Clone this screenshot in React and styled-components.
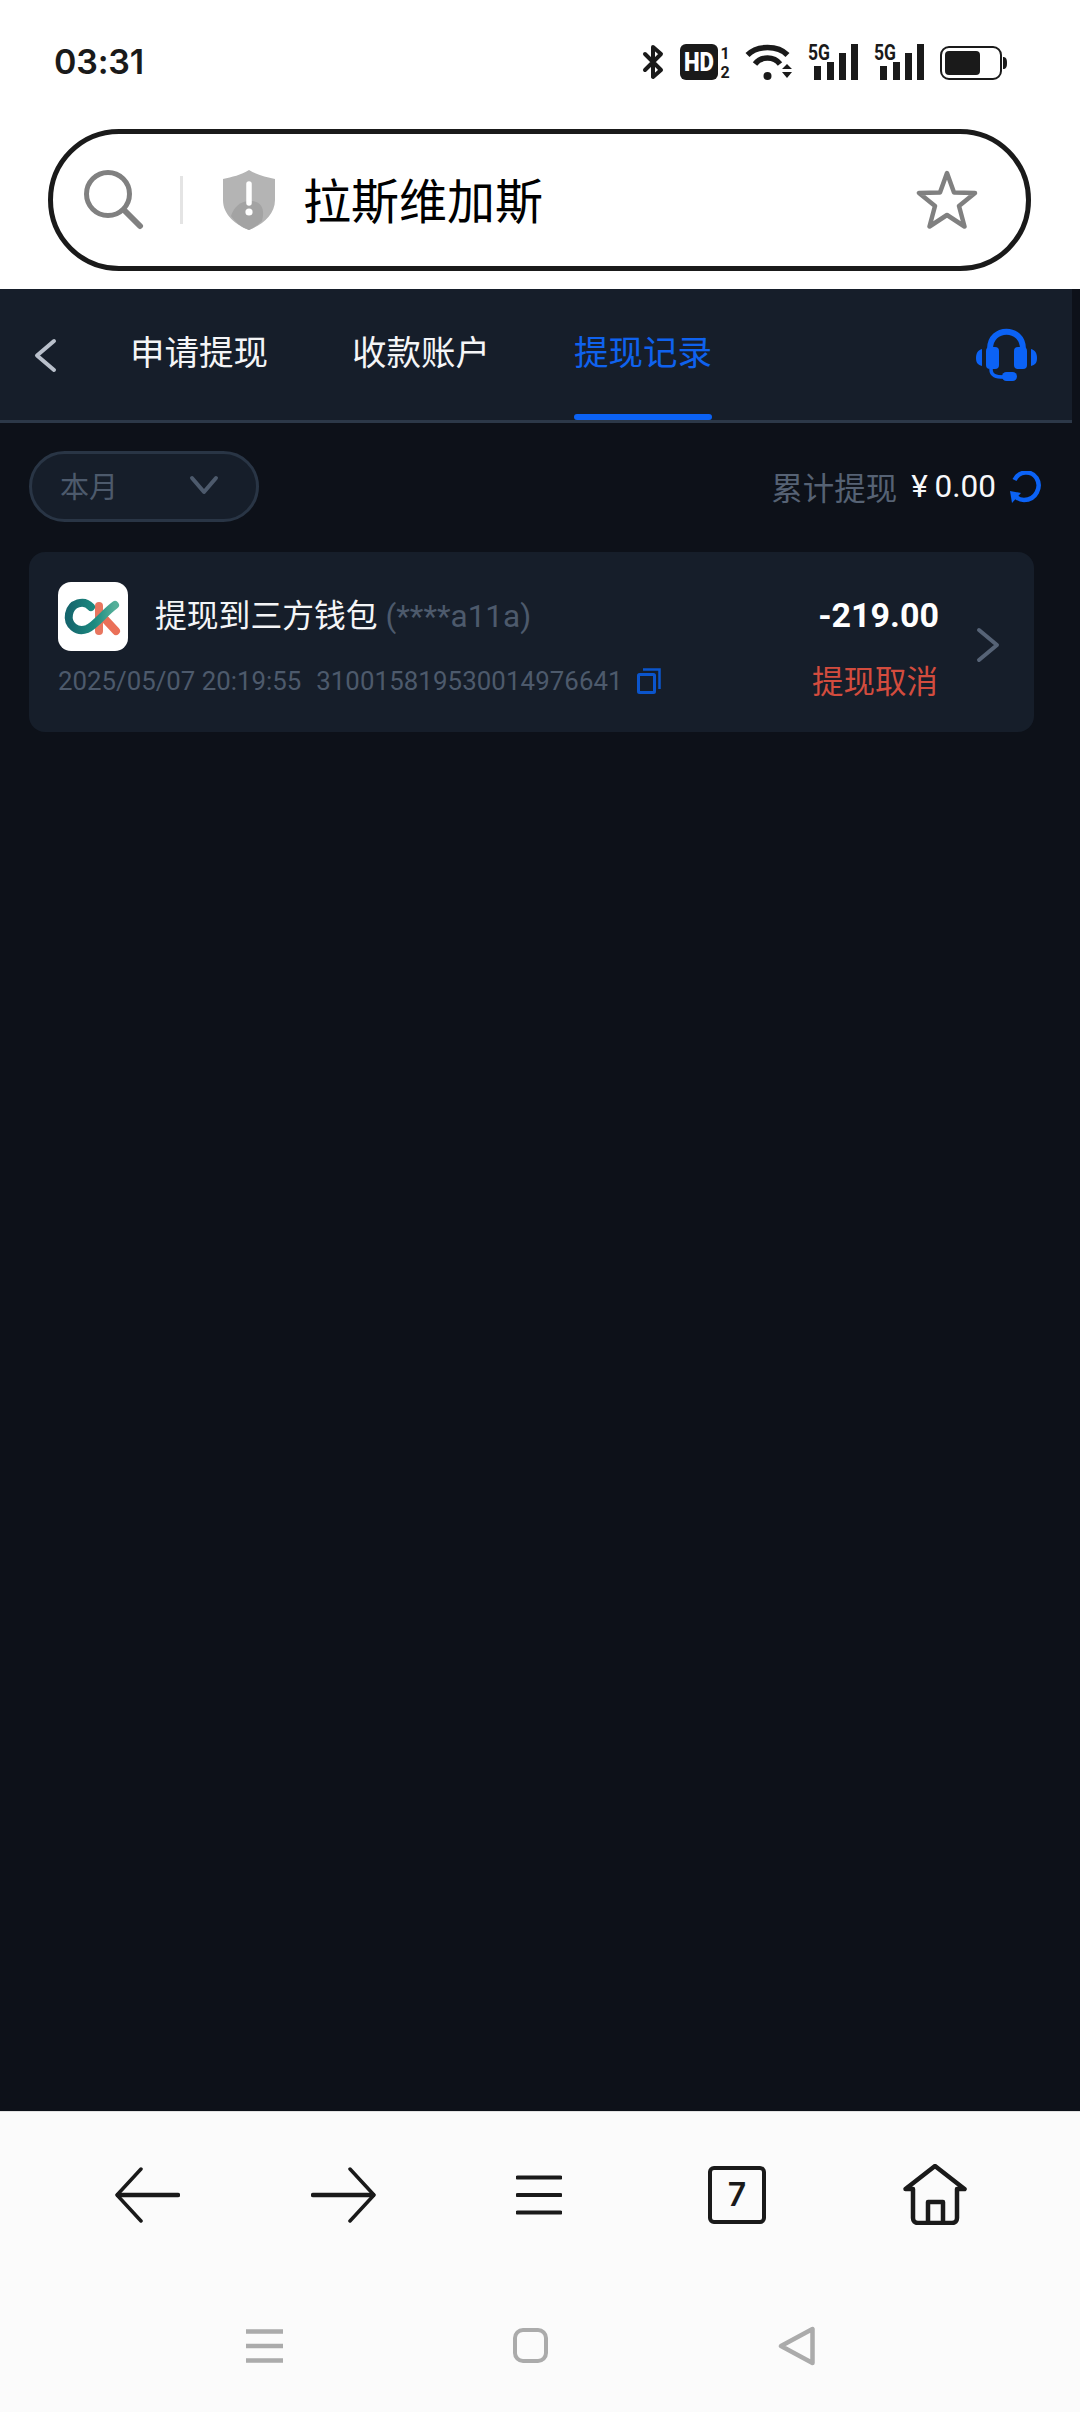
import React from "react";
import styled, { createGlobalStyle } from "styled-components";

const CJK = `Roboto, "Noto Sans CJK SC", sans-serif`;

const Global = createGlobalStyle`
  html, body { margin: 0; padding: 0; background: #fff; }
  * { box-sizing: border-box; }
`;
const Screen = styled.div`
  width: 1080px; height: 2412px; display: flex; flex-direction: column;
  overflow: hidden; font-family: ${CJK}; background: #fff;
`;
const StatusBar = styled.div`
  height: 129px; display: flex; justify-content: space-between; align-items: flex-start;
  padding: 44px 73px 0 54px;
`;
const Time = styled.div`
  font: 600 34px/36px Inter, sans-serif; color: #1a1a1a; letter-spacing: -0.2px;
`;
const StatusIcons = styled.div`
  display: flex; align-items: center; gap: 16px; height: 36px;
  svg { display: block; overflow: visible; }
`;
const SearchArea = styled.div`
  height: 160px; padding: 0 49px 18px 48px;
`;
const SearchPill = styled.div`
  height: 142px; border: 5px solid #1a1a1a; border-radius: 71px; background: #fff;
  display: flex; align-items: center; padding: 0 48px 0 31px;
`;
const PillDivider = styled.span`
  width: 3px; height: 48px; background: #e4e4e4; margin: 0 39px 0 36px;
`;
const SearchText = styled.span`
  font: 400 48px/60px "Noto Sans CJK SC", sans-serif; color: #000; margin: 0 0 5px 27px; flex: 1;
`;
const Body = styled.div`
  flex: 1; background: #0d1119; display: flex; flex-direction: column; min-height: 0;
`;
const Header = styled.div`
  width: 1072px; height: 134px; background: #161e2a; border-bottom: 3px solid #2c3848;
  display: flex; align-items: stretch; padding-left: 33px; position: relative;
`;
const BackButton = styled.div`
  width: 97px; display: flex; align-items: center; padding-top: 1px;
`;
const Tabs = styled.div`
  display: flex; gap: 84px; flex: 1;
`;
const Tab = styled.div`
  position: relative; display: flex; align-items: center; padding-bottom: 9px;
  font-size: 34.5px; font-weight: 400; color: ${p => (p.$active ? "#0f62ee" : "#f4f5f7")};
  ${p => p.$active && `
    &::after {
      content: ""; position: absolute; left: 0; right: 0; bottom: 0; height: 6px;
      border-radius: 3px; background: #0b62f5;
    }
  `}
`;
const HeadsetSlot = styled.div`
  display: flex; align-items: flex-start; padding: 38px 35px 0 0;
`;
const Content = styled.div`
  padding: 28px 46px 0 29px; display: flex; flex-direction: column; gap: 30px;
`;
const FilterRow = styled.div`
  display: flex; justify-content: space-between; align-items: center;
`;
const FilterPill = styled.div`
  width: 230px; height: 71px; border: 3px solid #293545; border-radius: 36px; background: #161e2a;
  display: flex; align-items: center; justify-content: space-between; padding: 0 36px 3px 28px;
  font-size: 29px; color: #4d5a6c;
`;
const TotalGroup = styled.div`
  display: flex; align-items: center; margin-right: -7px;
`;
const TotalLabel = styled.span`
  font-size: 31.5px; color: #566274; padding-bottom: 2px;
`;
const TotalValue = styled.span`
  font-size: 31.5px; color: #f7f8fa; margin: 0 13px 0 14px; word-spacing: -1px;
`;
const Card = styled.div`
  height: 180px; border-radius: 16px; background: #161e2a; display: flex; align-items: flex-start;
  padding: 30px 33px 0 29px;
`;
const CardMain = styled.div`
  flex: 1; display: flex; flex-direction: column; gap: 15px;
`;
const TitleRow = styled.div`
  display: flex; align-items: center; gap: 27px;
`;
const Logo = styled.div`
  width: 70px; height: 69px; border-radius: 13px; background: #fff; flex: none;
  svg { display: block; }
`;
const Title = styled.div`
  font-size: 31.8px; color: #f4f5f7; padding-bottom: 8px; white-space: nowrap;
`;
const Masked = styled.span`
  color: #4d5a6c; font-size: 31.5px;
`;
const MetaRow = styled.div`
  display: flex; align-items: center; font-size: 25.8px; color: #4d5a6c; white-space: nowrap;
`;
const MetaNumber = styled.span`
  margin-left: 15px; margin-right: 14px; letter-spacing: 0.1px;
`;
const CardSide = styled.div`
  display: flex; flex-direction: column; align-items: flex-end; gap: 23px; padding-top: 10px;
`;
const Amount = styled.div`
  font-size: 34px; line-height: 46px; font-weight: 700; color: #fff; margin-right: -1px;
`;
const StatusText = styled.div`
  font-size: 31.5px; line-height: 44px; color: #d34c3e;
`;
const CardChevron = styled.div`
  margin: 44px 0 0 37px;
  svg { display: block; }
`;
const BrowserBar = styled.div`
  height: 301px; background: #fbfbfb; border-top: 1px solid #e2e2e2; display: flex; flex-direction: column;
`;
const Toolbar = styled.div`
  height: 183px; display: grid; grid-template-columns: 197px 194px 197px 200px 196px; padding-left: 49px;
  align-items: center; justify-items: center; padding-bottom: 18px;
`;
const TabCount = styled.div`
  width: 58px; height: 58px; border: 4.5px solid #1a1a1a; border-radius: 6px;
  display: flex; align-items: center; justify-content: center;
  font: 600 32px/1 Inter, sans-serif; color: #1a1a1a;
`;
const SystemNav = styled.div`
  flex: 1; display: grid; grid-template-columns: repeat(3, 266px); padding-left: 131px;
  align-items: center; justify-items: center; padding-bottom: 16px;
`;

const Bluetooth = () => (
  <svg width="21" height="36" viewBox="0 0 21 36">
    <path d="M2 10 L18 26 L10 33 V3 L18 10 L2 26" fill="none" stroke="#1a1a1a" strokeWidth="4" strokeLinejoin="round" strokeLinecap="round" />
  </svg>
);
const HdIcon = () => (
  <svg width="50" height="36" viewBox="0 0 50 36">
    <rect x="0" y="0" width="38" height="36" rx="6" fill="#1a1a1a" />
    <text x="19" y="27" textAnchor="middle" fontFamily="Roboto, sans-serif" fontWeight="900" fontSize="25" fill="#fff" textLength="30" lengthAdjust="spacingAndGlyphs">HD</text>
    <text x="45" y="15" textAnchor="middle" fontFamily="Roboto, sans-serif" fontWeight="700" fontSize="16" fill="#1a1a1a">1</text>
    <text x="45" y="34" textAnchor="middle" fontFamily="Roboto, sans-serif" fontWeight="700" fontSize="16" fill="#1a1a1a">2</text>
  </svg>
);
const WifiIcon = () => (
  <svg width="46" height="36" viewBox="0 0 46 36">
    <g fill="none" stroke="#1a1a1a" strokeWidth="5.5">
      <path d="M1.5 11 C11 1 32 1 41.5 11" />
      <path d="M9 20 C15 12 28 12 34 20" />
    </g>
    <circle cx="21.5" cy="32" r="4" fill="#1a1a1a" />
    <path d="M36 25 L41 20 L46 25 Z M36 28 H46 L41 34 Z" fill="#1a1a1a" />
  </svg>
);
const SignalIcon = () => (
  <svg width="50" height="36" viewBox="0 0 50 36">
    <text x="0" y="16" fontFamily="Roboto, sans-serif" fontWeight="700" fontSize="22" fill="#1a1a1a" textLength="22" lengthAdjust="spacingAndGlyphs">5G</text>
    <rect x="6" y="22" width="7" height="14" fill="#1a1a1a" />
    <rect x="19" y="18" width="7" height="18" fill="#1a1a1a" />
    <rect x="31" y="9" width="7" height="27" fill="#1a1a1a" />
    <rect x="43" y="0" width="7" height="36" fill="#1a1a1a" />
  </svg>
);
const BatteryIcon = () => (
  <svg width="67" height="36" viewBox="0 0 67 36">
    <rect x="1" y="3" width="60" height="32" rx="8" fill="none" stroke="#1a1a1a" strokeWidth="2" />
    <rect x="5" y="7" width="35" height="24" rx="4" fill="#1a1a1a" />
    <path d="M63 13 C66 13 67 15 67 19 C67 23 66 25 63 25 Z" fill="#1a1a1a" />
  </svg>
);
const SearchIcon = () => (
  <svg width="60" height="60" viewBox="0 0 60 60">
    <circle cx="24" cy="24" r="21.5" fill="none" stroke="#808080" strokeWidth="5" />
    <path d="M40 40 L56 56" stroke="#808080" strokeWidth="6" strokeLinecap="round" />
  </svg>
);
const ShieldIcon = () => (
  <svg width="54" height="60" viewBox="0 0 54 60">
    <path d="M27 0 C35 5 44 7 53 9 V30 C53 45 40 55 27 60 C14 55 1 45 1 30 V9 C10 7 19 5 27 0 Z" fill="#b4b4b4" />
    <path d="M9 46 C12 36 20 30 30 31 C40 32 43 40 40 51 C36 55 31 58 27 60 C19 57 13 52 9 46 Z" fill="#a3a3a3" />
    <path d="M27 14 V33" stroke="#fff" strokeWidth="5.5" strokeLinecap="round" />
    <circle cx="27" cy="42" r="3.6" fill="#fff" />
  </svg>
);
const StarIcon = () => (
  <svg width="62" height="60" viewBox="0 0 62 60">
    <path d="M31 3 L38 22.5 L59 23 L43 36 L48.5 56.5 L31 45 L13.5 56.5 L19 36 L3 23 L24 22.5 Z" fill="none" stroke="#808080" strokeWidth="4.5" strokeLinejoin="round" />
  </svg>
);
const Chevron = ({ dir = "left", w, h, color, sw }) => {
  const d = {
    left: `M${w - sw} ${sw} L${sw} ${h / 2} L${w - sw} ${h - sw}`,
    right: `M${sw} ${sw} L${w - sw} ${h / 2} L${sw} ${h - sw}`,
    down: `M${sw} ${sw} L${w / 2} ${h - sw} L${w - sw} ${sw}`,
  }[dir];
  return (
    <svg width={w} height={h} viewBox={`0 0 ${w} ${h}`}>
      <path d={d} fill="none" stroke={color} strokeWidth={sw} strokeLinecap="round" strokeLinejoin="round" />
    </svg>
  );
};
const HeadsetIcon = () => (
  <svg width="61" height="55" viewBox="0 0 61 55">
    <path d="M14 28 V22 C14 -1 47 -1 47 22 V28" fill="none" stroke="#0b62f5" strokeWidth="6" />
    <rect x="10" y="20" width="13" height="22" rx="4" fill="#0b62f5" />
    <rect x="38" y="20" width="13" height="22" rx="4" fill="#0b62f5" />
    <path d="M6 22 C2 23 0 26 0 31 C0 36 2 38 6 39 Z M55 22 C59 23 61 26 61 31 C61 36 59 38 55 39 Z" fill="#0b62f5" />
    <path d="M15 42 C15 49 20 50 28 50" fill="none" stroke="#0b62f5" strokeWidth="3.5" />
    <rect x="26" y="45" width="15" height="9" rx="4.5" fill="#0b62f5" />
  </svg>
);
const RefreshIcon = () => (
  <svg width="32" height="32" viewBox="0 0 32 32">
    <path d="M5.5 9 C10 0 22 -1 27.5 7 C33 16 27 29 15 29 C12 29 9.5 28 7 26" fill="none" stroke="#0b62f5" strokeWidth="4.5" />
    <path d="M1 20 L12 22 L3 32 Z" fill="#0b62f5" />
  </svg>
);
const CopyIcon = () => (
  <svg width="24" height="26" viewBox="0 0 24 26">
    <rect x="1.5" y="6.5" width="16" height="18" rx="1" fill="none" stroke="#0b55cc" strokeWidth="3" />
    <path d="M6 1.5 H22.5 V21" fill="none" stroke="#0b55cc" strokeWidth="2.5" />
  </svg>
);
const CkLogo = () => (
  <svg width="70" height="69" viewBox="0 0 70 69">
    <defs>
      <linearGradient id="ckTeal" x1="0" y1="0" x2="1" y2="0">
        <stop offset="0" stopColor="#15666d" />
        <stop offset="0.55" stopColor="#1c8a80" />
        <stop offset="1" stopColor="#55b09a" />
      </linearGradient>
    </defs>
    <path d="M41 24 V49" stroke="#e8765f" strokeWidth="8" strokeLinecap="round" />
    <path d="M45 35 L58 49" stroke="#ea7058" strokeWidth="8" strokeLinecap="round" />
    <path d="M33 25 C26 17 13 21 11 32 C9 43 19 51 29 47 C38 43 46 31 57 23" fill="none" stroke="url(#ckTeal)" strokeWidth="8" strokeLinecap="round" />
  </svg>
);
const ArrowIcon = ({ flip }) => (
  <svg width="65" height="56" viewBox="0 0 65 56" style={flip ? { transform: "scaleX(-1)" } : undefined}>
    <path d="M26 2 L2 28 L26 54" fill="none" stroke="#1a1a1a" strokeWidth="3.5" strokeLinecap="round" strokeLinejoin="round" />
    <path d="M3 28 H63" stroke="#1a1a1a" strokeWidth="4.5" strokeLinecap="round" />
  </svg>
);
const MenuIcon = () => (
  <svg width="46" height="40" viewBox="0 0 46 40">
    <path d="M1.5 2.5 H44.5 M1.5 20 H44.5 M1.5 37.5 H44.5" stroke="#1a1a1a" strokeWidth="4" strokeLinecap="round" />
  </svg>
);
const HomeIcon = () => (
  <svg width="64" height="61" viewBox="0 0 64 61">
    <path d="M2.5 25 L32 2 L61.5 25 H54 V54 C54 57 52 59 49 59 H15 C12 59 10 57 10 54 V25 Z" fill="none" stroke="#1a1a1a" strokeWidth="4.5" strokeLinecap="round" strokeLinejoin="round" />
    <path d="M25 59 V38 H40 V59" fill="none" stroke="#1a1a1a" strokeWidth="4.5" strokeLinejoin="round" />
  </svg>
);
const NavMenuIcon = () => (
  <svg width="37" height="34" viewBox="0 0 37 34">
    <path d="M0 2.5 H37 M0 17 H37 M0 31.5 H37" stroke="#ababab" strokeWidth="4.5" />
  </svg>
);
const NavHomeIcon = () => (
  <svg width="35" height="35" viewBox="0 0 35 35">
    <rect x="2" y="2" width="31" height="31" rx="8" fill="none" stroke="#ababab" strokeWidth="4" />
  </svg>
);
const NavBackIcon = () => (
  <svg width="37" height="40" viewBox="0 0 37 40">
    <path d="M34.5 3 V37 L3 20 Z" fill="none" stroke="#ababab" strokeWidth="4.5" strokeLinejoin="round" />
  </svg>
);

export default function App() {
  return (
    <Screen>
      <Global />
      <StatusBar>
        <Time>03:31</Time>
        <StatusIcons>
          <Bluetooth />
          <HdIcon />
          <WifiIcon />
          <SignalIcon />
          <SignalIcon />
          <BatteryIcon />
        </StatusIcons>
      </StatusBar>
      <SearchArea>
        <SearchPill>
          <SearchIcon />
          <PillDivider />
          <ShieldIcon />
          <SearchText>拉斯维加斯</SearchText>
          <StarIcon />
        </SearchPill>
      </SearchArea>
      <Body>
        <Header>
          <BackButton>
            <Chevron dir="left" w={25} h={37} color="#b9c0cb" sw={4} />
          </BackButton>
          <Tabs>
            <Tab>申请提现</Tab>
            <Tab>收款账户</Tab>
            <Tab $active>提现记录</Tab>
          </Tabs>
          <HeadsetSlot>
            <HeadsetIcon />
          </HeadsetSlot>
        </Header>
        <Content>
          <FilterRow>
            <FilterPill>
              本月
              <Chevron dir="down" w={32} h={22} color="#4d5a6c" sw={4} />
            </FilterPill>
            <TotalGroup>
              <TotalLabel>累计提现</TotalLabel>
              <TotalValue>¥ 0.00</TotalValue>
              <RefreshIcon />
            </TotalGroup>
          </FilterRow>
          <Card>
            <CardMain>
              <TitleRow>
                <Logo><CkLogo /></Logo>
                <Title>提现到三方钱包 <Masked>(****a11a)</Masked></Title>
              </TitleRow>
              <MetaRow>
                2025/05/07 20:19:55
                <MetaNumber>310015819530014976641</MetaNumber>
                <CopyIcon />
              </MetaRow>
            </CardMain>
            <CardSide>
              <Amount>-219.00</Amount>
              <StatusText>提现取消</StatusText>
            </CardSide>
            <CardChevron>
              <Chevron dir="right" w={26} h={38} color="#566376" sw={4} />
            </CardChevron>
          </Card>
        </Content>
      </Body>
      <BrowserBar>
        <Toolbar>
          <ArrowIcon />
          <ArrowIcon flip />
          <MenuIcon />
          <TabCount>7</TabCount>
          <HomeIcon />
        </Toolbar>
        <SystemNav>
          <NavMenuIcon />
          <NavHomeIcon />
          <NavBackIcon />
        </SystemNav>
      </BrowserBar>
    </Screen>
  );
}
